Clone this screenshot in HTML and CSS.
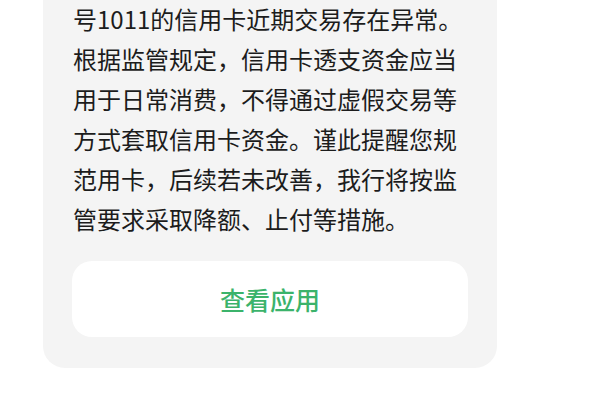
FILE: index.html
```html
<!DOCTYPE html>
<html lang="zh-CN">
<head>
<meta charset="utf-8">
<link rel="stylesheet" href="styles.css">
</head>
<body>
<div class="card">
  <p class="msg">号1011的信用卡近期交易存在异常。<br>根据监管规定，信用卡透支资金应当<br>用于日常消费，不得通过虚假交易等<br>方式套取信用卡资金。谨此提醒您规<br>范用卡，后续若未改善，我行将按监<br>管要求采取降额、止付等措施。</p>
  <div class="btn">查看应用</div>
</div>
</body>
</html>
```
FILE: styles.css
```css
html, body {
  margin: 0;
  padding: 0;
  background: #ffffff;
  overflow: hidden;
}
body {
  width: 600px;
  height: 400px;
  font-family: "Noto Sans CJK SC", "Noto Sans", sans-serif;
}
.card {
  margin: -20px 0 0 43px;
  width: 454px;
  box-sizing: border-box;
  padding: 19px 29px 31px 29px;
  background: #f4f4f4;
  border-radius: 0 0 22px 22px;
}
.msg {
  margin: 0 0 0 1px;
  font-size: 24px;
  line-height: 40px;
  color: #1c1c1c;
  white-space: nowrap;
}
.digits {
  letter-spacing: -1px;
}
.btn {
  margin-top: 22px;
  height: 76px;
  background: #ffffff;
  border-radius: 20px;
  display: flex;
  align-items: center;
  justify-content: center;
  color: #3bb36b;
  font-size: 25px;
  font-weight: 500;
}
```
